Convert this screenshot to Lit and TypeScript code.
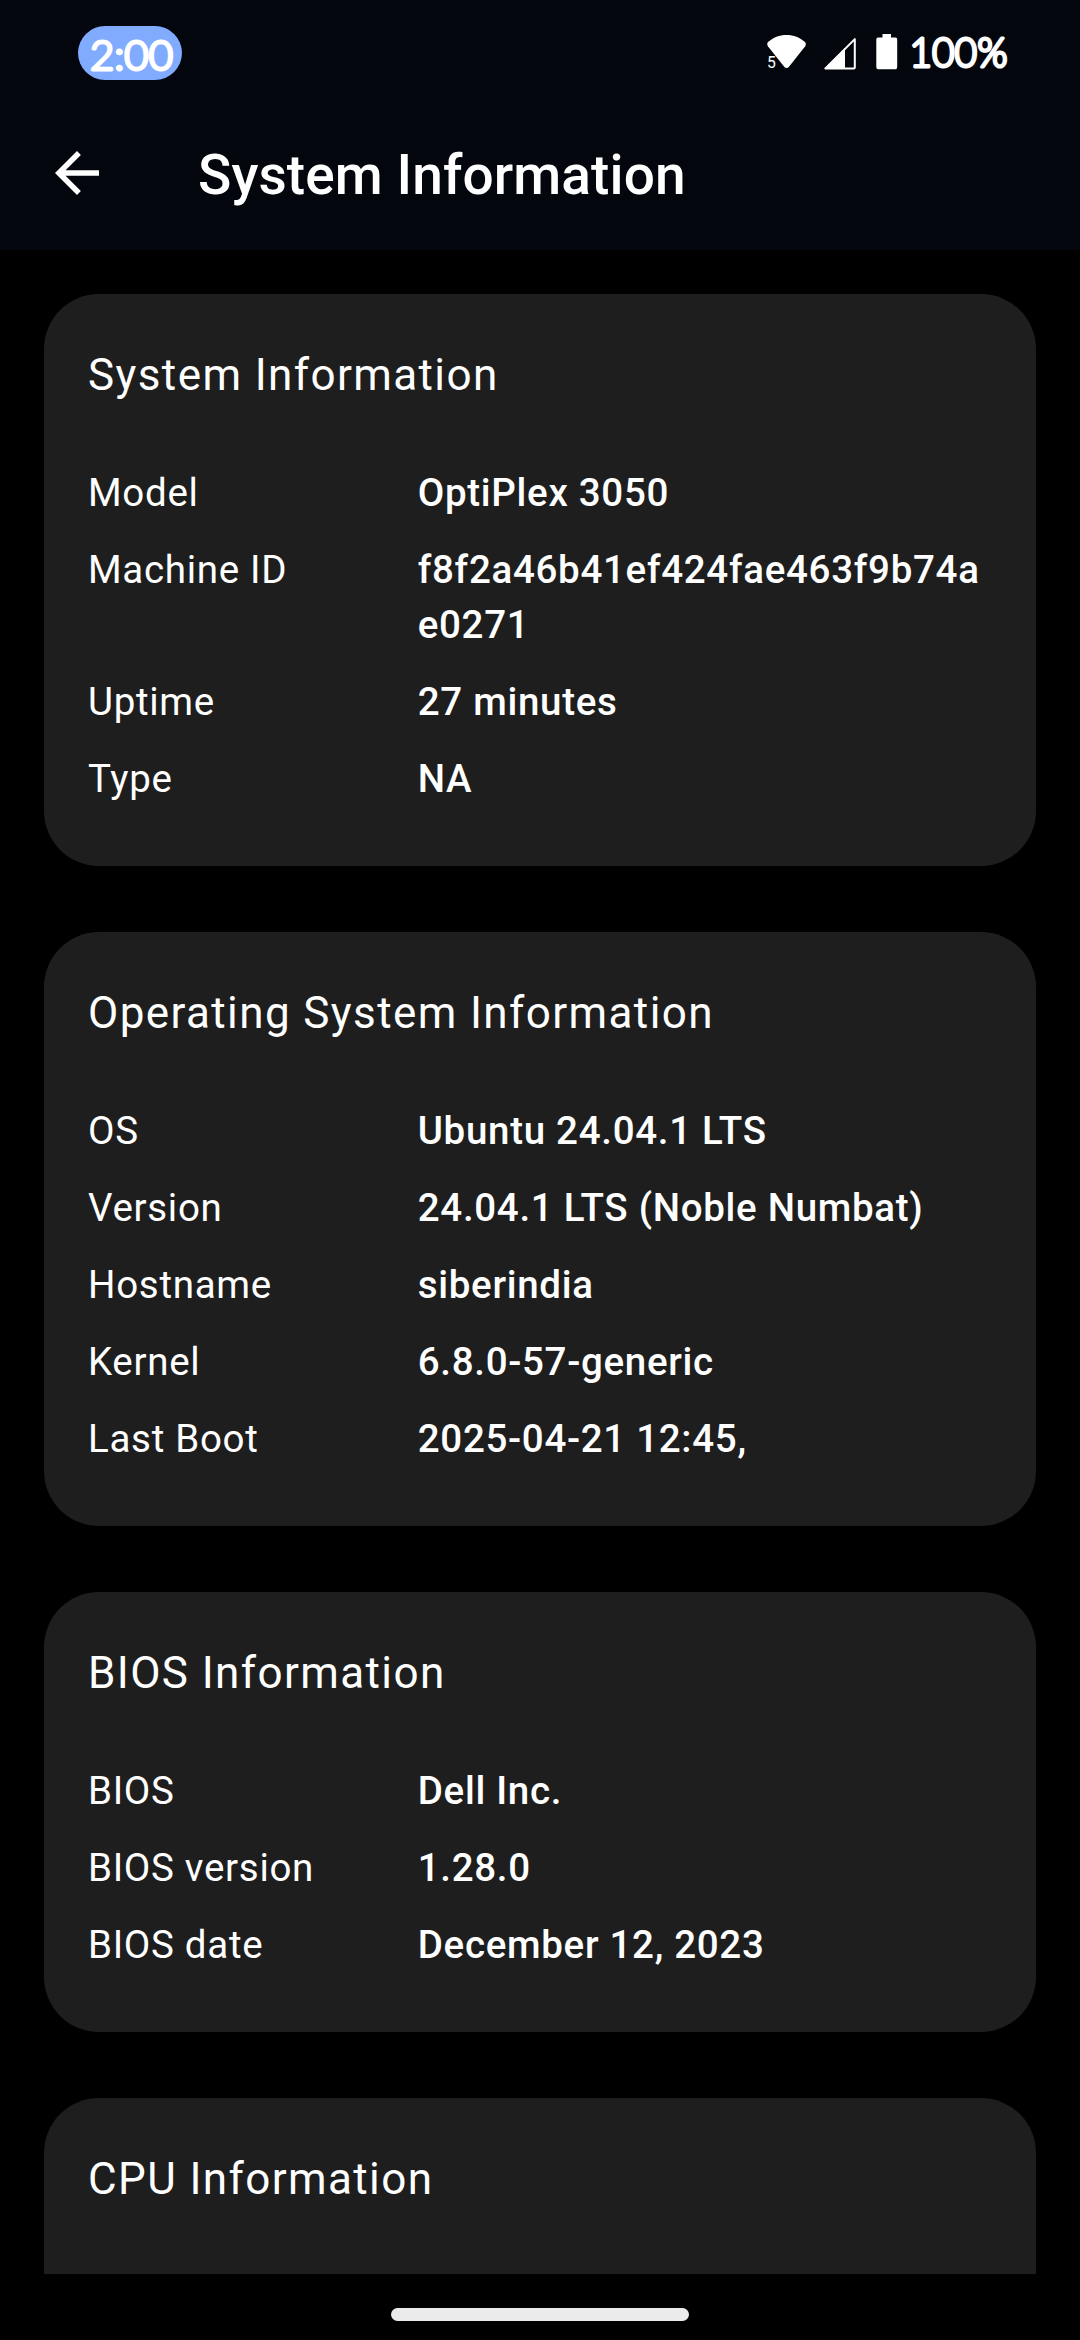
import { LitElement, html, css } from "lit";
import { customElement, property } from "lit/decorators.js";

type Row = [label: string, value: string];
interface Section {
  title: string;
  rows: Row[];
}

const SECTIONS: Section[] = [
  {
    title: "System Information",
    rows: [
      ["Model", "OptiPlex 3050"],
      ["Machine ID", "f8f2a46b41ef424fae463f9b74ae0271"],
      ["Uptime", "27 minutes"],
      ["Type", "NA"],
    ],
  },
  {
    title: "Operating System Information",
    rows: [
      ["OS", "Ubuntu 24.04.1 LTS"],
      ["Version", "24.04.1 LTS (Noble Numbat)"],
      ["Hostname", "siberindia"],
      ["Kernel", "6.8.0-57-generic"],
      ["Last Boot", "2025-04-21 12:45,"],
    ],
  },
  {
    title: "BIOS Information",
    rows: [
      ["BIOS", "Dell Inc."],
      ["BIOS version", "1.28.0"],
      ["BIOS date", "December 12, 2023"],
    ],
  },
  { title: "CPU Information", rows: [] },
];

@customElement("status-bar")
export class StatusBar extends LitElement {
  static styles = css`
    :host {
      display: flex;
      justify-content: space-between;
      height: 54px;
      padding: 26px 66px 0 78px;
      color: #fff;
    }
    .clock {
      width: 104px;
      height: 54px;
      border-radius: 27px;
      background: #80abff;
    }
    .icons {
      display: flex;
      align-items: flex-start;
    }
    .wifi {
      width: 42px;
      height: 38px;
      margin: 8px 14px 0 0;
    }
    .signal {
      width: 34px;
      height: 34px;
      margin: 10px 19px 0 0;
    }
    .battery {
      width: 22px;
      height: 36px;
      margin: 8px 5px 0 0;
    }
    .level {
      width: 111px;
      height: 54px;
      overflow: visible;
    }
    .digits {
      fill: #fff;
      stroke: #fff;
      stroke-width: 3px;
      stroke-linejoin: round;
      font: 300 40.5px Lato, sans-serif;
    }
    .band {
      font: 17px Roboto, sans-serif;
    }
  `;

  render() {
    return html`
      <svg class="clock" viewBox="0 0 104 54">
        <text class="digits" x="12" y="44" textLength="83" lengthAdjust="spacingAndGlyphs">2:00</text>
      </svg>
      <div class="icons">
        <svg class="wifi" viewBox="0 0 42 38" fill="#fff">
          <path
            d="M1 8C6.500 3.400 12 1 19.500 1S32.500 3.400 38 8Q39.600 9.800 38.200 12.200L21.800 33Q19.500 35 17.400 33L.9 12.200Q-.5 9.800 1 8Z"
          />
          <text class="band" x="0" y="34" textLength="8.800" lengthAdjust="spacingAndGlyphs">5</text>
        </svg>
        <svg class="signal" viewBox="0 0 34 34">
          <path
            d="M2.400 32.500L31.800 3.100V31.500Q31.800 32.500 30.800 32.500Z"
            fill="none"
            stroke="#fff"
            stroke-width="2"
            stroke-linejoin="round"
          />
          <path d="M1.500 33L22 12V33Z" fill="#fff" />
        </svg>
        <svg class="battery" viewBox="0 0 22 36" fill="#fff">
          <path
            d="M6.500 0H15V3.500H19.500Q21.200 3.500 21.200 5.500V33Q21.200 35.300 19.500 35.300H2Q.3 35.300 .3 33V5.500Q.3 3.500 2 3.500H6.500Z"
          />
        </svg>
        <svg class="level" viewBox="0 0 111 54">
          <text class="digits" x="6.500" y="41" textLength="98" lengthAdjust="spacingAndGlyphs">100%</text>
        </svg>
      </div>
    `;
  }
}

@customElement("info-card")
export class InfoCard extends LitElement {
  @property({ attribute: false }) section!: Section;

  static styles = css`
    :host {
      display: block;
      flex: none;
      box-sizing: border-box;
      padding: 48px 44px 49px;
      border-radius: 55px;
      background: #1e1e1e;
      color: #fff;
    }
    .title {
      margin: 0 0 46px;
      font-size: 44px;
      font-weight: 400;
      line-height: 66px;
      letter-spacing: 1.4px;
    }
    .row {
      display: grid;
      grid-template-columns: 4fr 7fr;
      padding: 11px 0;
      font-size: 38.5px;
      line-height: 55px;
      letter-spacing: 0.7px;
    }
    .value {
      min-width: 0;
      padding-left: 1px;
      font-weight: 500;
      overflow-wrap: anywhere;
    }
  `;

  render() {
    return html`
      <h2 class="title">${this.section.title}</h2>
      ${this.section.rows.map(
        ([label, value]) => html`
          <div class="row">
            <div class="label">${label}</div>
            <div class="value">${value}</div>
          </div>
        `
      )}
    `;
  }
}

@customElement("app-root")
export class AppRoot extends LitElement {
  static styles = css`
    :host {
      display: flex;
      flex-direction: column;
      width: 1080px;
      height: 2340px;
      overflow: hidden;
      background: #000;
      color: #fff;
      font-family: Roboto, sans-serif;
    }
    .header {
      flex: none;
      height: 250px;
      background: #03060d;
    }
    .appbar {
      display: flex;
      align-items: center;
      gap: 88px;
      padding: 58px 44px 0 44px;
    }
    .back {
      width: 66px;
      height: 66px;
    }
    .heading {
      margin: 0;
      padding-top: 4px;
      font-size: 55px;
      font-weight: 500;
      line-height: 66px;
      letter-spacing: 0.1px;
    }
    .list {
      display: flex;
      flex: 1;
      flex-direction: column;
      gap: 66px;
      min-height: 0;
      padding: 44px 44px 0;
      overflow: hidden;
    }
    .last {
      height: 400px;
    }
    .nav {
      display: flex;
      flex: none;
      justify-content: center;
      align-items: flex-start;
      box-sizing: border-box;
      height: 66px;
      padding-top: 34px;
    }
    .handle {
      width: 298px;
      height: 13px;
      border-radius: 7px;
      background: #ebebeb;
    }
  `;

  render() {
    return html`
      <header class="header">
        <status-bar></status-bar>
        <div class="appbar">
          <svg class="back" viewBox="0 0 24 24" fill="#fff">
            <path d="M20 11H7.830l5.590-5.590L12 4l-8 8 8 8 1.410-1.410L7.830 13H20v-2z" />
          </svg>
          <h1 class="heading">System Information</h1>
        </div>
      </header>
      <main class="list">
        ${SECTIONS.map((s) => html`<info-card .section=${s} class=${s.rows.length ? "" : "last"}></info-card>`)}
      </main>
      <div class="nav"><div class="handle"></div></div>
    `;
  }
}
